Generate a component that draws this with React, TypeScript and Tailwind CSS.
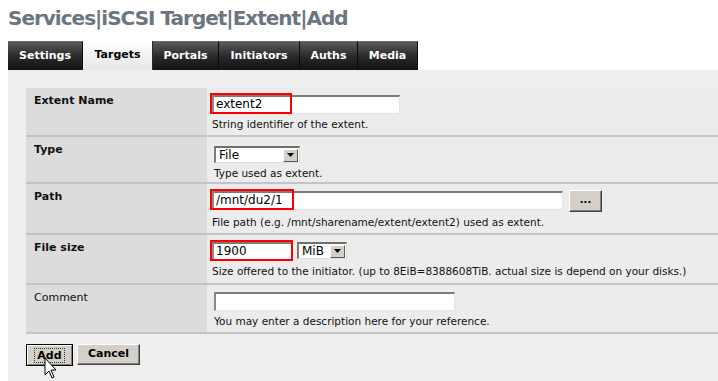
import React from "react";

const tabs = [
  { name: "Settings", w: 75 },
  { name: "Targets", w: 70, active: true },
  { name: "Portals", w: 66 },
  { name: "Initiators", w: 81 },
  { name: "Auths", w: 58 },
  { name: "Media", w: 60 },
];

function Sunken({ w, children }: { w: number; children?: React.ReactNode }) {
  return (
    <div
      className="relative h-[19px] bg-white border-t-2 border-l-2 border-t-[#7b7b7b] border-l-[#8a8a8a] border-b border-r border-b-[#e4e4e4] border-r-[#e4e4e4] text-[12px] leading-[15px] pl-[2px] text-black"
      style={{ width: w }}
    >
      {children}
    </div>
  );
}

function RedBox({ w }: { w: number }) {
  return (
    <div
      className="absolute left-[-2px] top-[-2px] h-[21px] border-2 border-[#ff0000] pointer-events-none"
      style={{ width: w }}
    />
  );
}

function Select({ w, value }: { w: number; value: string }) {
  return (
    <div
      className="flex items-center h-[17px] bg-white border-t-2 border-l-2 border-t-[#6f6f6f] border-l-[#7b7b7b] border-b border-r border-b-[#dcdcdc] border-r-[#dcdcdc] text-[12px] text-black"
      style={{ width: w }}
    >
      <span className="flex-1 pl-[3px] leading-[14px]">{value}</span>
      <div className="w-[15px] h-[13px] mr-[1px] bg-[#d4d0c8] border border-t-white border-l-white border-b-[#5a5a5a] border-r-[#5a5a5a] flex items-center justify-center">
        <svg width="7" height="4" viewBox="0 0 7 4">
          <path d="M0 0h7L3.5 4z" fill="#000" />
        </svg>
      </div>
    </div>
  );
}

function Help({ children }: { children: React.ReactNode }) {
  return <div className="mt-[3px] text-[10.5px] leading-[14px] text-[#111]">{children}</div>;
}

function Row({
  label,
  bold = true,
  h,
  children,
}: {
  label: string;
  bold?: boolean;
  h: number;
  children: React.ReactNode;
}) {
  return (
    <div className="flex border-b-2 border-b-[#c4c4c4]" style={{ height: h }}>
      <div
        className={`w-[181px] shrink-0 bg-[#dcdcdc] pl-[8px] pt-[6px] text-[11px] leading-[14px] text-[#111] ${
          bold ? "font-bold" : ""
        }`}
      >
        {label}
      </div>
      <div className="flex-1 bg-[#ececec] pl-[5px] pt-[7px]">{children}</div>
    </div>
  );
}

export default function App() {
  return (
    <div className="relative w-[718px] h-[381px] overflow-hidden bg-white font-['DejaVu_Sans',sans-serif]">
      <h1 className="h-[41px] pl-[8px] pt-[6px] text-[20px] leading-[24px] font-bold tracking-[-1px] text-[#6b7580]">
        Services|iSCSI Target|Extent|Add
      </h1>
      <div className="flex pl-[8px] h-[29px]">
        {tabs.map((t) =>
          t.active ? (
            <div
              key={t.name}
              className="flex items-center justify-center h-full bg-gradient-to-b from-white to-[#e6e6e6] border-r border-[#2a2a2a] text-[11px] font-bold text-black"
              style={{ width: t.w }}
            >
              {t.name}
            </div>
          ) : (
            <div
              key={t.name}
              className="flex items-center justify-center h-full bg-gradient-to-b from-[#5a5a5a] via-[#2c2c2c] to-[#121212] border-r border-[#0c0c0c] border-t border-t-[#6a6a6a] text-[11px] font-bold text-white"
              style={{ width: t.w }}
            >
              {t.name}
            </div>
          )
        )}
      </div>
      <div className="ml-[8px] h-[311px] bg-[#eeeeee] pl-[18px] pt-[18px]">
        <div className="flex flex-col">
          <Row label="Extent Name" h={49}>
            <div className="relative">
              <Sunken w={188}>extent2</Sunken>
              <RedBox w={82} />
            </div>
            <Help>String identifier of the extent.</Help>
          </Row>
          <Row label="Type" h={47}>
            <div className="pt-[2px] pl-[2px]">
              <Select w={86} value="File" />
              <Help>Type used as extent.</Help>
            </div>
          </Row>
          <Row label="Path" h={51}>
            <div className="flex items-start gap-[6px]">
              <div className="relative">
                <Sunken w={351}>/mnt/du2/1</Sunken>
                <RedBox w={84} />
              </div>
              <div className="mt-[-1px] w-[33px] h-[22px] bg-[#d4d0c8] border border-t-white border-l-white border-b-[#404040] border-r-[#404040] shadow-[inset_-1px_-1px_0_#808080] flex items-center justify-center text-[10px] font-bold leading-none pb-[3px]">
                ...
              </div>
            </div>
            <Help>File path (e.g. /mnt/sharename/extent/extent2) used as extent.</Help>
          </Row>
          <Row label="File size" h={50}>
            <div className="flex items-start gap-[4px]">
              <div className="relative">
                <Sunken w={81}>1900</Sunken>
                <RedBox w={83} />
              </div>
              <Select w={50} value="MiB" />
            </div>
            <Help>Size offered to the initiator. (up to 8EiB=8388608TiB. actual size is depend on your disks.)</Help>
          </Row>
          <Row label="Comment" bold={false} h={49}>
            <div className="pl-[2px]">
              <Sunken w={241} />
              <Help>You may enter a description here for your reference.</Help>
            </div>
          </Row>
        </div>
        <div className="flex gap-[4px] mt-[10px] items-start">
          <div className="w-[47px] h-[22px] border border-black bg-[#d4d0c8] flex">
            <div className="flex-1 border border-t-white border-l-white border-b-[#808080] border-r-[#808080] flex items-center justify-center">
              <span className="px-[2px] border border-dotted border-[#333] text-[11px] font-bold leading-[13px] text-black">Add</span>
            </div>
          </div>
          <div className="w-[63px] h-[21px] bg-[#d4d0c8] border border-t-white border-l-white border-b-[#404040] border-r-[#404040] shadow-[inset_-1px_-1px_0_#808080] flex items-center justify-center text-[11px] font-bold text-black">
            Cancel
          </div>
        </div>
      </div>
      <svg className="absolute left-[44px] top-[357px]" width="14" height="24" viewBox="0 0 14 24">
        <path d="M1 1 L1 18 L5 14 L8 21 L10 20 L7 13 L12 13 Z" fill="#fff" stroke="#000" strokeWidth="1" strokeLinejoin="miter" />
      </svg>
    </div>
  );
}
